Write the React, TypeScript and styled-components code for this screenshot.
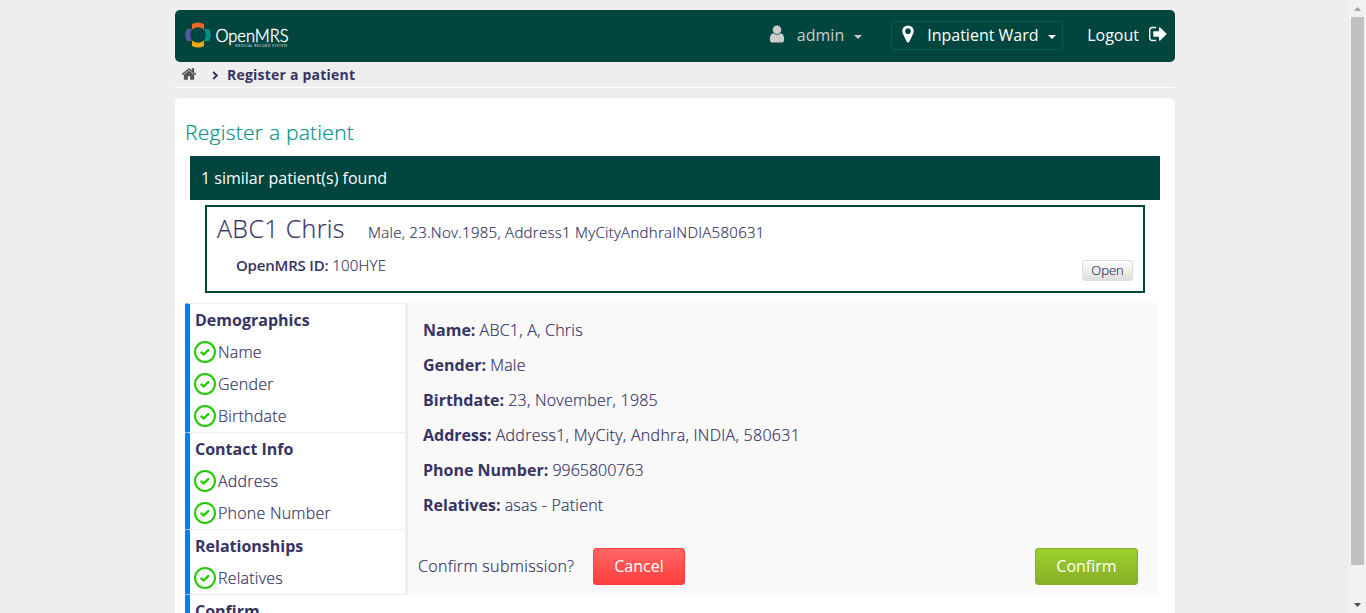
import React from 'react';
import styled, { createGlobalStyle } from 'styled-components';

const Global = createGlobalStyle`
  * { box-sizing: border-box; }
  html, body { margin: 0; padding: 0; background: #eeeeee; overflow: hidden; }
  body, button { font-family: 'Open Sans', 'Noto Sans', sans-serif; }
`;

const Viewport = styled.div`
  display: flex;
  height: 613px;
  overflow: hidden;
  color: #363463;
  font-size: 16px;
  font-weight: 300;
  line-height: 32px;
  white-space: nowrap;
`;
const Content = styled.div`
  flex: 1;
  height: 613px;
  padding: 10px 174px 0 175px;
  overflow: hidden;
`;

const Light = styled.span<{ $track?: number }>`
  font-weight: 300;
  letter-spacing: ${p => p.$track ?? 0.22}px;
  -webkit-text-stroke: 0.2px currentColor;
`;

const Scrollbar = styled.div`
  display: flex;
  flex-direction: column;
  align-items: center;
  width: 17px;
  height: 613px;
  background: #f1f1f1;
`;
const ScrollButton = styled.div`
  display: flex;
  align-items: center;
  justify-content: center;
  width: 17px;
  height: 17px;
`;
const Thumb = styled.div`
  width: 13px;
  height: 548px;
  background: #c1c1c1;
  margin-bottom: auto;
`;

const Header = styled.header`
  display: flex;
  align-items: center;
  height: 52px;
  padding: 0 6px 2px 10px;
  border-radius: 5px;
  background: #00463f;
  color: #fff;
  font-weight: 400;
`;
const Brand = styled.div`
  display: flex;
  align-items: center;
  margin-right: auto;
`;
const User = styled.div`
  display: flex;
  align-items: center;
  color: #cccccc;
  margin-right: 29px;
`;
const Label = styled.span<{ $left: number; $right: number }>`
  margin-left: ${p => p.$left}px;
  margin-right: ${p => p.$right}px;
`;
const Location = styled.div`
  display: flex;
  align-items: center;
  width: 172px;
  height: 29px;
  padding-left: 6px;
  border: 1px solid #005b53;
  border-radius: 3px;
  margin-right: 24px;
`;
const Caret = styled.i`
  border: 4px solid transparent;
  border-top-color: currentColor;
  border-bottom: 0;
  width: 0;
  height: 0;
  margin-top: 3px;
`;
const IconSlot = styled.span`
  display: flex;
  padding-bottom: 2px;
`;

const Breadcrumb = styled.nav`
  display: flex;
  align-items: center;
  height: 26px;
  padding-left: 6px;
  border-bottom: 1px solid #fff;
  font-size: 14px;
  font-weight: 700;
  line-height: 25px;
  letter-spacing: 0.22px;
`;
const Card = styled.main`
  height: 600px;
  margin-top: 10px;
  padding: 17px 17px 0 10px;
  border-radius: 5px;
  background: #fff;
`;
const Title = styled.h2`
  margin: 0;
  height: 41px;
  line-height: 35px;
  font-size: 21px;
  font-weight: 300;
  color: #009384;
`;
const Notice = styled.div`
  width: 970px;
  height: 44px;
  margin-left: 5px;
  padding-left: 11px;
  line-height: 44px;
  font-weight: 400;
  background: #00463f;
  color: #fff;
`;
const Patient = styled.section`
  display: flex;
  justify-content: space-between;
  align-items: flex-end;
  width: 940px;
  height: 88px;
  margin: 5px 0 10px 20px;
  padding: 0 10px;
  border: 2px solid #00463f;
`;
const PatientText = styled.div`
  height: 84px;
`;
const PatientHead = styled.div`
  display: flex;
  align-items: baseline;
  height: 43px;
  line-height: 42px;
`;
const PatientName = styled.span`
  width: 151px;
  font-size: 25px;
`;
const PatientInfo = styled.span`
  font-size: 15px;
`;
const Identifier = styled.div`
  padding-left: 19px;
  font-size: 15px;
  line-height: 30px;
`;
const Em = styled.span`
  font-weight: 600;
  letter-spacing: -0.2px;
`;

const Button = styled.button<{ $kind: 'plain' | 'cancel' | 'confirm' }>`
  height: 37px;
  padding: 0 0 2px;
  border: 1px solid;
  border-radius: 3px;
  font-size: 16px;
  font-weight: 400;
  color: #fff;
  ${p => p.$kind === 'cancel' && `
    width: 92px;
    border-color: #ff3d3d;
    background: linear-gradient(#ff6666, #ff3d3d);
  `}
  ${p => p.$kind === 'confirm' && `
    width: 103px;
    margin-left: auto;
    border-color: #88af28;
    background: linear-gradient(#9ad02e, #88af28);
  `}
  ${p => p.$kind === 'plain' && `
    width: 51px;
    height: 21px;
    padding: 0;
    margin-bottom: 10px;
    border-color: #dddddd;
    background: linear-gradient(#ffffff, #dddddd);
    color: #363463;
    font-size: 13px;
    font-weight: 300;
    line-height: 19px;
  `}
`;

const Form = styled.div`
  display: flex;
  align-items: flex-start;
`;
const Steps = styled.ul`
  width: 220px;
  margin: 0;
  padding: 0;
  list-style: none;
`;
const Step = styled.li`
  border-left: 5px solid #007fff;
  border-top: 1px solid #eeeeee;
  border-top-left-radius: 2px;
  padding-left: 5px;
`;
const StepTitle = styled.div`
  height: 32px;
  font-weight: 700;
`;
const Field = styled.div`
  display: flex;
  align-items: center;
  gap: 2px;
  height: 32px;
  margin-left: -1px;
`;
const Summary = styled.section`
  width: 753px;
  height: 292px;
  padding: 10px 20px 0 10px;
  border-left: 3px solid #eeeeee;
  background: #f9f9f9;
`;
const Detail = styled.div`
  height: 35px;
  padding-left: 5px;
  line-height: 35px;
`;
const Strong = styled.span`
  font-weight: 700;
`;
const Actions = styled.div`
  display: flex;
  align-items: center;
  height: 37px;
  margin-top: 25px;
`;
const Question = styled.span`
  width: 175px;
  padding-bottom: 2px;
`;

const icons = {
  user: 'M1536 1399q0 109-62.5 187t-150.5 78h-854q-88 0-150.5-78t-62.5-187q0-85 8.5-160.5t31.5-152 58.5-131 94-89 134.5-34.5q131 128 313 128t313-128q76 0 134.5 34.5t94 89 58.5 131 31.5 152 8.5 160.5zm-256-887q0 159-112.5 271.5t-271.5 112.5-271.5-112.5-112.5-271.5 112.5-271.5 271.5-112.5 271.5 112.5 112.5 271.5z',
  pin: 'M1152 640q0-106-75-181t-181-75-181 75-75 181 75 181 181 75 181-75 75-181zm256 0q0 109-33 179l-364 774q-16 33-47.5 52t-67.5 19-67.5-19-46.5-52l-365-774q-33-70-33-179 0-212 150-362t362-150 362 150 150 362z',
  exit: 'M640 1440q0 4 1 20t.5 26.5-3 23.5-10 19.5-20.5 6.5h-320q-119 0-203.5-84.5t-84.5-203.5v-704q0-119 84.5-203.5t203.5-84.5h320q13 0 22.5 9.5t9.5 22.5q0 4 1 20t.5 26.5-3 23.5-10 19.5-20.5 6.5h-320q-66 0-113 47t-47 113v704q0 66 47 113t113 47h312l11.5 1 11.5 3 8 5.5 7 9 2 13.5zm928-544q0 26-19 45l-544 544q-19 19-45 19t-45-19-19-45v-288h-448q-26 0-45-19t-19-45v-384q0-26 19-45t45-19h448v-288q0-26 19-45t45-19 45 19l544 544q19 19 19 45z',
  home: 'M1472 992v480q0 26-19 45t-45 19h-384v-384h-256v384h-384q-26 0-45-19t-19-45v-480q0-1 .5-3t.5-3l575-474 575 474q1 2 1 6zm223-69l-62 74q-8 9-21 11h-3q-13 0-21-7l-692-577-692 577q-12 8-24 7-13-2-21-11l-62-74q-8-10-7-23.5t11-21.5l719-599q32-26 76-26t76 26l244 204v-195q0-14 9-23t23-9h192q14 0 23 9t9 23v408l219 182q10 8 11 21.5t-7 23.5z',
};

const Icon = ({ name, size, color = 'currentColor' }: { name: keyof typeof icons; size: number; color?: string }) => (
  <IconSlot>
    <svg width={size} height={size} viewBox="0 0 1792 1792" fill={color}><path d={icons[name]} /></svg>
  </IconSlot>
);

const Logo = () => (
  <svg width="110" height="36" viewBox="0 -4 110 36">
    <path d="M7 3 Q13 0 19 3 V8.500 Q13 4 7 8.500Z" fill="#f26522" />
    <path d="M7 25 Q13 28 19 25 V19.500 Q13 24 7 19.500Z" fill="#eea616" />
    <path d="M2 8 Q-1.500 14 2 20 H7 Q3.500 14 7 8Z" fill="#5b57a6" />
    <path d="M24 8 Q27.500 14 24 20 H19 Q22.500 14 19 8Z" fill="#009384" />
    <text x="30.500" y="20.500" fontSize="17" fontFamily="Lato, sans-serif" fontWeight="300" fill="#fff" stroke="#fff" strokeWidth="0.400" textLength="73" lengthAdjust="spacingAndGlyphs">OpenMRS</text>
    <text x="50" y="26" fontSize="3.300" fontFamily="Lato, sans-serif" fontWeight="400" fill="#d5e2e0" textLength="52">MEDICAL RECORD SYSTEM</text>
  </svg>
);

const Check = () => (
  <svg width="22" height="22" viewBox="0 0 22 22" fill="none" stroke="#25c900">
    <circle cx="11" cy="11" r="10" strokeWidth="2" />
    <path d="M6.700 10.800 L9.600 13.500 L15 8.300" strokeWidth="2.300" />
  </svg>
);

const Chevron = () => (
  <svg width="7" height="9" viewBox="0 0 7 9" fill="none" stroke="#363463" strokeWidth="2">
    <path d="M1.200 1 L4.800 4.500 L1.200 8" />
  </svg>
);
const ChevronSlot = styled.span`
  display: flex;
  margin: 2px 8px 0 15px;
`;

const steps = [
  { title: 'Demographics', fields: ['Name', 'Gender', 'Birthdate'] },
  { title: 'Contact Info', fields: ['Address', 'Phone Number'] },
  { title: 'Relationships', fields: ['Relatives'] },
  { title: 'Confirm', fields: [] },
];

const details: { label: string; value: string; track?: number }[] = [
  { label: 'Name', value: 'ABC1, A, Chris' },
  { label: 'Gender', value: 'Male' },
  { label: 'Birthdate', value: '23, November, 1985' },
  { label: 'Address', value: 'Address1, MyCity, Andhra, INDIA, 580631', track: 0.28 },
  { label: 'Phone Number', value: '9965800763', track: 0 },
  { label: 'Relatives', value: 'asas - Patient' },
];

export default function App() {
  return (
    <Viewport>
      <Global />
      <Content>
        <Header>
          <Brand><Logo /></Brand>
          <User>
            <Icon name="user" size={20} />
            <Label $left={10} $right={10}>admin</Label>
            <Caret />
          </User>
          <Location>
            <Icon name="pin" size={20} />
            <Label $left={9} $right={9}>Inpatient Ward</Label>
            <Caret />
          </Location>
          <Label $left={0} $right={10}>Logout</Label>
          <Icon name="exit" size={20} />
        </Header>
        <Breadcrumb>
          <Icon name="home" size={16} color="#555555" />
          <ChevronSlot><Chevron /></ChevronSlot>
          Register a patient
        </Breadcrumb>
        <Card>
          <Title><Light $track={0.25}>Register a patient</Light></Title>
          <Notice>1 similar patient(s) found</Notice>
          <Patient>
            <PatientText>
              <PatientHead>
                <PatientName><Light $track={0.35}>ABC1 Chris</Light></PatientName>
                <PatientInfo><Light $track={0.28}>Male, 23.Nov.1985, Address1 MyCityAndhraINDIA580631</Light></PatientInfo>
              </PatientHead>
              <Identifier><Em>OpenMRS ID:</Em> <Light>100HYE</Light></Identifier>
            </PatientText>
            <Button $kind="plain"><Light $track={0}>Open</Light></Button>
          </Patient>
          <Form>
            <Steps>
              {steps.map(s => (
                <Step key={s.title}>
                  <StepTitle>{s.title}</StepTitle>
                  {s.fields.map(f => (
                    <Field key={f}><Check /><Light>{f}</Light></Field>
                  ))}
                </Step>
              ))}
            </Steps>
            <Summary>
              {details.map(d => (
                <Detail key={d.label}><Strong>{d.label}:</Strong> <Light $track={d.track}>{d.value}</Light></Detail>
              ))}
              <Actions>
                <Question><Light $track={0.33}>Confirm submission?</Light></Question>
                <Button $kind="cancel">Cancel</Button>
                <Button $kind="confirm">Confirm</Button>
              </Actions>
            </Summary>
          </Form>
        </Card>
      </Content>
      <Scrollbar>
        <ScrollButton>
          <svg width="7" height="4" viewBox="0 0 7 4"><path d="M3.500 0 L7 4 H0Z" fill="#a3a3a3" /></svg>
        </ScrollButton>
        <Thumb />
        <ScrollButton>
          <svg width="7" height="4" viewBox="0 0 7 4"><path d="M0 0 H7 L3.500 4Z" fill="#505050" /></svg>
        </ScrollButton>
      </Scrollbar>
    </Viewport>
  );
}
